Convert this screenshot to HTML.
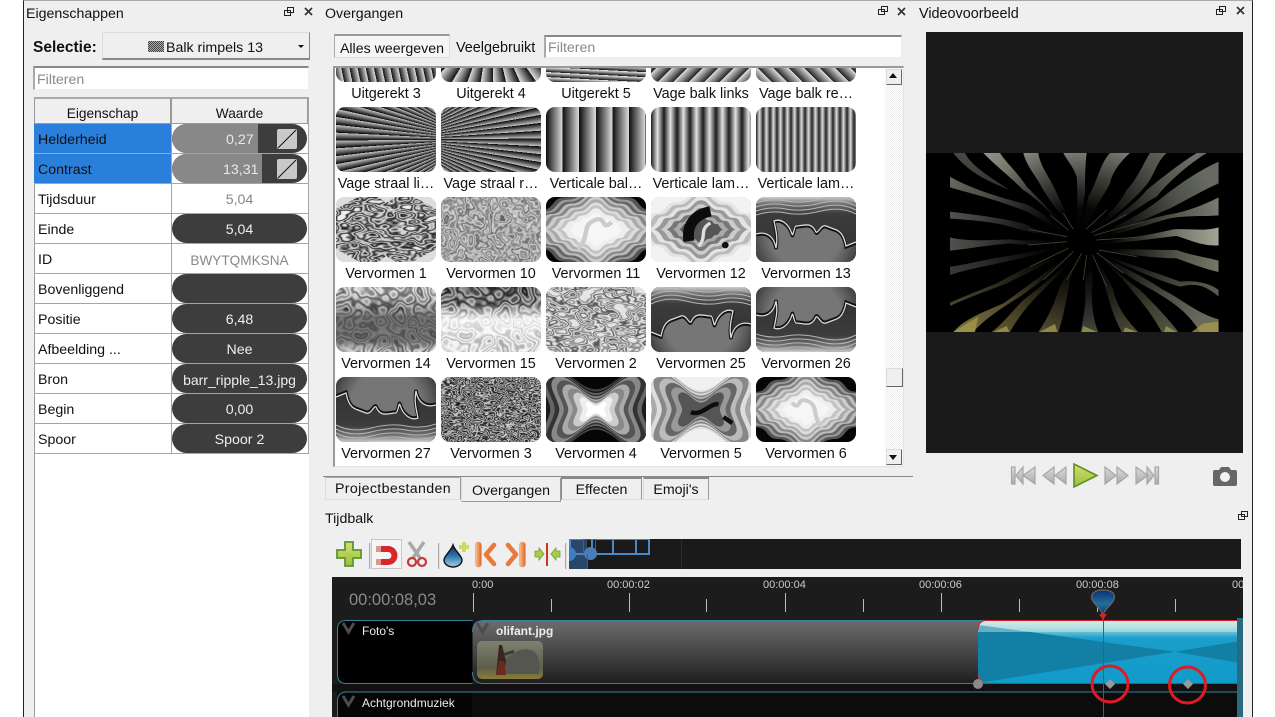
<!DOCTYPE html>
<html lang="nl"><head><meta charset="utf-8"><title>Overgangen</title>
<style>
html,body{margin:0;padding:0;background:#fff}
body{width:1275px;height:717px;overflow:hidden;position:relative;font:14.2px "Liberation Sans",sans-serif;color:#111}
.x{position:absolute;white-space:nowrap}
.app{position:absolute;left:23px;top:0;width:1230px;height:717px;background:#efefef;box-sizing:border-box;border-left:1px solid #222;border-right:1px solid #222;border-top:1px solid #aaa}
.abs{position:absolute;box-sizing:border-box}
.inp{background:#fff;border:1px solid #eee;border-top:2px solid #888;border-left:2px solid #aaa;color:#8a8a8a;padding-left:2px;line-height:23px}
.row{position:absolute;left:34px;width:274px;height:30px;border-bottom:1px solid #a5a5a5;box-sizing:border-box}
.lab{position:absolute;left:4px;top:8px;line-height:16px}
.pill{position:absolute;left:138px;top:0;width:135px;height:29px;border-radius:15px;background:#3d3d3d;color:#eee;text-align:center;line-height:33px;overflow:hidden}
.plain{position:absolute;left:138px;top:0;width:135px;text-align:center;color:#888;line-height:33px}
.t{position:absolute;width:100px;height:65px;border-radius:9px;overflow:hidden;background:#888}
.t svg{display:block;width:100px;height:65px}
.l{position:absolute;width:104px;text-align:center;white-space:nowrap;line-height:16px;margin-top:1px;font-size:14.4px}
.tab{position:absolute;box-sizing:border-box;text-align:center;background:#efefef;border:1px solid #999;border-left-color:#ddd;border-bottom:1px solid #ddd;border-top:2px solid #8a8a8a;line-height:23px}
.hl{color:#eee;font-size:12px;text-shadow:0 0 3px #000}
</style></head><body>
<svg width="0" height="0" style="position:absolute"><defs>
<filter id="w1" x="0" y="0" width="100%" height="100%" color-interpolation-filters="sRGB"><feTurbulence type="fractalNoise" baseFrequency=".05 .11" numOctaves="2" seed="7"/><feColorMatrix values="1 0 0 0 0 1 0 0 0 0 1 0 0 0 0 0 0 0 0 1"/><feComponentTransfer><feFuncR type="table" tableValues="0 0 .1 .85 .1 .9 .2 .9 .15 .9 .1 .9 .95 .1 0 0 0"/><feFuncG type="table" tableValues="0 0 .1 .85 .1 .9 .2 .9 .15 .9 .1 .9 .95 .1 0 0 0"/><feFuncB type="table" tableValues="0 0 .1 .85 .1 .9 .2 .9 .15 .9 .1 .9 .95 .1 0 0 0"/></feComponentTransfer></filter>
<filter id="w2" x="0" y="0" width="100%" height="100%" color-interpolation-filters="sRGB"><feTurbulence type="fractalNoise" baseFrequency=".06 .12" numOctaves="2" seed="12"/><feColorMatrix values="1 0 0 0 0 1 0 0 0 0 1 0 0 0 0 0 0 0 0 1"/><feComponentTransfer><feFuncR type="table" tableValues=".9 .9 .9 .9 .3 .9 .45 .95 .3 .95 .5 .9 .9 .9 .9 .9 .9"/><feFuncG type="table" tableValues=".9 .9 .9 .9 .3 .9 .45 .95 .3 .95 .5 .9 .9 .9 .9 .9 .9"/><feFuncB type="table" tableValues=".9 .9 .9 .9 .3 .9 .45 .95 .3 .95 .5 .9 .9 .9 .9 .9 .9"/></feComponentTransfer></filter>
<filter id="w3" x="0" y="0" width="100%" height="100%" color-interpolation-filters="sRGB"><feTurbulence type="fractalNoise" baseFrequency=".09 .17" numOctaves="2" seed="21"/><feColorMatrix values="1 0 0 0 0 1 0 0 0 0 1 0 0 0 0 0 0 0 0 1"/><feComponentTransfer><feFuncR type="table" tableValues="0 0 0 .9 .05 .8 .05 .9 .1 .85 .05 .8 .05 .9 0 0 0"/><feFuncG type="table" tableValues="0 0 0 .9 .05 .8 .05 .9 .1 .85 .05 .8 .05 .9 0 0 0"/><feFuncB type="table" tableValues="0 0 0 .9 .05 .8 .05 .9 .1 .85 .05 .8 .05 .9 0 0 0"/></feComponentTransfer></filter>
<filter id="w10" x="0" y="0" width="100%" height="100%" color-interpolation-filters="sRGB"><feTurbulence type="fractalNoise" baseFrequency=".06" numOctaves="3" seed="31"/><feColorMatrix values="1 0 0 0 0 1 0 0 0 0 1 0 0 0 0 0 0 0 0 1"/><feComponentTransfer><feFuncR type="table" tableValues=".4 .4 .55 .35 .8 .45 .85 .5 .8 .4 .85 .5 .8 .35 .55 .4 .4"/><feFuncG type="table" tableValues=".4 .4 .55 .35 .8 .45 .85 .5 .8 .4 .85 .5 .8 .35 .55 .4 .4"/><feFuncB type="table" tableValues=".4 .4 .55 .35 .8 .45 .85 .5 .8 .4 .85 .5 .8 .35 .55 .4 .4"/></feComponentTransfer></filter>
<filter id="b" x="0" y="0" width="100%" height="100%" color-interpolation-filters="sRGB"><feTurbulence type="fractalNoise" baseFrequency=".055" numOctaves="2" seed="9"/><feColorMatrix values="1 0 0 0 0 1 0 0 0 0 1 0 0 0 0 0 0 0 0 1"/><feComponentTransfer result="n"><feFuncR type="table" tableValues="1 1 .4 1 .1 1 .45 1 .2 1 .35 1 .1 1 .5 1 1"/><feFuncG type="table" tableValues="1 1 .4 1 .1 1 .45 1 .2 1 .35 1 .1 1 .5 1 1"/><feFuncB type="table" tableValues="1 1 .4 1 .1 1 .45 1 .2 1 .35 1 .1 1 .5 1 1"/></feComponentTransfer><feBlend in="SourceGraphic" in2="n" mode="multiply"/></filter>
<path id="sD" d="M0-30C8-30 8-20 18-20 26-20 24-12 32-12 40-12 36-5 46 0 36 5 40 12 32 12 24 12 26 20 18 20 8 20 8 30 0 30-8 30-8 20-18 20-26 20-24 12-32 12-40 12-36 5-46 0-36-5-40-12-32-12-24-12-26-20-18-20-8-20-8-30 0-30Z"/>
<path id="sX" d="M-30-25C-20-28-10-10 0-10 10-10 20-28 30-25 40-20 28-8 28 0 28 8 40 20 30 25 20 28 10 10 0 10-10 10-20 28-30 25-40 20-28 8-28 0-28-8-40-20-30-25Z"/>
<g id="v11"><rect x="-90" y="-60" width="180" height="120" fill="#060606"/><use href="#sD" transform="scale(1.32)" fill="#555"/><use href="#sD" transform="scale(1.22)" fill="#999"/><use href="#sD" transform="scale(1.14)" fill="#666"/><use href="#sD" transform="scale(1.06)" fill="#bbb"/><use href="#sD" transform="scale(.98)" fill="#888"/><use href="#sD" transform="scale(.9)" fill="#ccc"/><use href="#sD" transform="scale(.82)" fill="#aaa"/><use href="#sD" transform="scale(.74)" fill="#ddd"/><use href="#sD" transform="scale(.66)" fill="#c4c4c4"/><use href="#sD" transform="scale(.58)" fill="#eee"/><use href="#sD" transform="scale(.45)" fill="#f6f6f6"/><path d="M-14 16C-4 6-12-4 0-8 8-11 4 2 12-6" fill="none" stroke="#ccc" stroke-width="3.500"/></g>
<g id="v12"><rect x="-90" y="-60" width="180" height="120" fill="#f2f2f2"/><use href="#sD" transform="scale(1.05)" fill="#e4e4e4"/><use href="#sD" transform="scale(.95)" fill="#bbb"/><use href="#sD" transform="scale(.85)" fill="#e4e4e4"/><use href="#sD" transform="scale(.75)" fill="#999"/><use href="#sD" transform="scale(.65)" fill="#ccc"/><use href="#sD" transform="scale(.55)" fill="#777"/><use href="#sD" transform="scale(.45)" fill="#aaa"/><use href="#sD" transform="scale(.35)" fill="#555"/><path d="M-9 9C-11-5-3-12 7-14" fill="none" stroke="#0c0c0c" stroke-width="8"/><path d="M-2 13C5 6-2 0 7-5" fill="none" stroke="#ddd" stroke-width="2.500"/><circle cx="18" cy="12" r="2.500" fill="#111"/></g>
<g id="v4"><rect x="-90" y="-60" width="180" height="120" fill="#060606"/><use href="#sX" transform="scale(1.75)" fill="#444"/><use href="#sX" transform="scale(1.58)" fill="#1c1c1c"/><use href="#sX" transform="scale(1.42)" fill="#666"/><use href="#sX" transform="scale(1.28)" fill="#333"/><use href="#sX" transform="scale(1.14)" fill="#888"/><use href="#sX" transform="scale(1)" fill="#555"/><use href="#sX" transform="scale(.86)" fill="#aaa"/><use href="#sX" transform="scale(.72)" fill="#888"/><use href="#sX" transform="scale(.58)" fill="#ccc"/><use href="#sX" transform="scale(.42)" fill="#eee"/><use href="#sX" transform="scale(.26)" fill="#fff"/></g>
<g id="v5"><rect x="-90" y="-60" width="180" height="120" fill="#f0f0f0"/><use href="#sX" transform="scale(1.55)" fill="#e4e4e4"/><use href="#sX" transform="scale(1.4)" fill="#aaa"/><use href="#sX" transform="scale(1.26)" fill="#ddd"/><use href="#sX" transform="scale(1.12)" fill="#888"/><use href="#sX" transform="scale(.98)" fill="#bbb"/><use href="#sX" transform="scale(.84)" fill="#666"/><use href="#sX" transform="scale(.7)" fill="#999"/><use href="#sX" transform="scale(.54)" fill="#555"/><path d="M-8 2C0 6 8-6 14-4M18 6l7 5" fill="none" stroke="#0c0c0c" stroke-width="3.500"/></g>
<linearGradient id="l14" x1="0" y1="0" x2="0" y2="1"><stop offset="0" stop-color="#eee"/><stop offset=".3" stop-color="#bbb"/><stop offset=".45" stop-color="#7a7a7a"/><stop offset=".8" stop-color="#8a8a8a"/><stop offset="1" stop-color="#ddd"/></linearGradient>
<linearGradient id="l15" x1="0" y1="0" x2="0" y2="1"><stop offset="0" stop-color="#aaa"/><stop offset=".35" stop-color="#ccc"/><stop offset=".55" stop-color="#fff"/><stop offset="1" stop-color="#f4f4f4"/></linearGradient>
<linearGradient id="wh15" x1="0" y1="0" x2="0" y2="1"><stop offset=".25" stop-color="#fff" stop-opacity="0"/><stop offset=".5" stop-color="#fff" stop-opacity=".85"/><stop offset=".85" stop-color="#fff" stop-opacity=".6"/></linearGradient>
<linearGradient id="wh14" x1="0" y1="0" x2="0" y2="1"><stop offset="0" stop-color="#fff" stop-opacity=".35"/><stop offset=".35" stop-color="#fff" stop-opacity=".1"/><stop offset=".45" stop-color="#777" stop-opacity=".55"/><stop offset=".85" stop-color="#777" stop-opacity=".55"/><stop offset="1" stop-color="#fff" stop-opacity=".2"/></linearGradient>
<linearGradient id="wtop" x1="0" y1="0" x2="0" y2="1"><stop offset="0" stop-color="#cfcfcf"/><stop offset=".12" stop-color="#777"/><stop offset=".32" stop-color="#3c3c3c"/><stop offset="1" stop-color="#333"/></linearGradient>
<radialGradient id="wvig" gradientUnits="userSpaceOnUse" cx="50" cy="36" r="64"><stop offset=".55" stop-color="#222" stop-opacity="0"/><stop offset="1" stop-color="#111" stop-opacity=".85"/></radialGradient>
<g id="wave"><rect width="100" height="65" fill="#767676"/><rect width="100" height="65" fill="url(#wvig)"/>
<path d="M0 0H100V46L90 50C88 40 85 35 78 33L70 30C65 28 62 38 60 36 55 25 48 30 40 30 38 30 37 42 36 38 33 28 25 22 18 25 20 35 22 42 20 52 18 40 10 35 0 38Z" fill="url(#wtop)"/>
<path d="M0 6q15-5 30-2t35-2 35 3M0 10q15-5 30-2t35-2 35 3M0 14q15-5 30-2t35-2 35 3M0 18q15-5 30-2t35-2 35 3" fill="none" stroke="#b4b4b4" stroke-width="1"/>
<path d="M100 46L90 50C88 40 85 35 78 33L70 30C65 28 62 38 60 36 55 25 48 30 40 30 38 30 37 42 36 38 33 28 25 22 18 25 20 35 22 42 20 52 18 40 10 35 0 38" fill="none" stroke="#111" stroke-width="3.200"/>
<path d="M100 45L90 49C88 39 85 34 78 32L70 29C65 27 62 37 60 35 55 24 48 29 40 29 38 29 37 41 36 37 33 27 25 21 18 24 20 34 22 41 20 51 18 39 10 34 0 37" fill="none" stroke="#ddd" stroke-width="1.300"/></g>
<radialGradient id="dim" gradientUnits="userSpaceOnUse" cx="510" cy="300" r="470"><stop offset="0" stop-color="#000"/><stop offset=".2" stop-color="#000" stop-opacity=".97"/><stop offset=".38" stop-color="#000" stop-opacity=".72"/><stop offset=".65" stop-color="#000" stop-opacity=".3"/><stop offset=".9" stop-color="#000" stop-opacity=".05"/></radialGradient>
<linearGradient id="gloss" x1="0" y1="0" x2="0" y2="1"><stop offset="0" stop-color="#e2e8e8"/><stop offset=".1" stop-color="#a8dcdc"/><stop offset=".28" stop-color="#1a9ecb"/><stop offset="1" stop-color="#109bc9"/></linearGradient>
<linearGradient id="clip" x1="0" y1="0" x2="0" y2="1"><stop offset="0" stop-color="#6d6d6d"/><stop offset="1" stop-color="#1e1e1e"/></linearGradient>
<linearGradient id="tg" x1="0" y1="0" x2="0" y2="1"><stop offset="0" stop-color="#dcdcdc"/><stop offset="1" stop-color="#aaa"/></linearGradient>
<linearGradient id="pg" x1="0" y1="0" x2="0" y2="1"><stop offset="0" stop-color="#d0e070"/><stop offset="1" stop-color="#9abf3c"/></linearGradient>
<linearGradient id="og" x1="0" y1="0" x2="1" y2="0"><stop offset="0" stop-color="#f6c490"/><stop offset="1" stop-color="#e2622a"/></linearGradient>
<linearGradient id="dg" x1="0" y1="0" x2="0" y2="1"><stop offset="0" stop-color="#0c2a50"/><stop offset=".5" stop-color="#2b78b0"/><stop offset="1" stop-color="#a8cce8"/></linearGradient>
<linearGradient id="ph" x1="0" y1="0" x2="0" y2="1"><stop offset="0" stop-color="#0b2f78"/><stop offset=".55" stop-color="#236f96"/><stop offset="1" stop-color="#0b3a6a"/></linearGradient>
<linearGradient id="thb" x1="0" y1="0" x2="0" y2="1"><stop offset="0" stop-color="#7d8170"/><stop offset=".7" stop-color="#5d5e4c"/><stop offset="1" stop-color="#8a7c36"/></linearGradient>
</defs></svg>

<div class="app"></div>

<!-- Eigenschappen -->
<div class="x" style="left:26px;top:6px">Eigenschappen</div>
<svg class="x" style="left:284px;top:7px" width="10" height="10"><path d="M3.500 .5h6v5h-6zM.5 3.500h6v5h-6z" fill="#efefef" stroke="#222"/></svg>
<svg class="x" style="left:304px;top:7px" width="10" height="10"><path d="M1 1l7 7M8 1L1 8" stroke="#333" stroke-width="1.700"/></svg>
<div class="x" style="left:33px;top:39px;font-weight:bold;font-size:15.5px">Selectie:</div>
<div class="abs" style="left:102px;top:32px;width:208px;height:28px;background:#efefef;border:1px solid #ddd;border-right-color:#888;border-bottom:2px solid #888"></div>
<div class="abs" style="left:148px;top:41px;width:16px;height:11px;background:repeating-conic-gradient(#444 0 25%,#aaa 0 50%) 0 0/2px 2px"></div>
<div class="x" style="left:166px;top:40px">Balk rimpels 13</div>
<div class="abs" style="left:298px;top:45px;border:3px solid transparent;border-top:3px solid #111"></div>
<div class="abs inp" style="left:33px;top:66px;width:276px;height:24px;line-height:25px">Filteren</div>

<div class="abs" style="left:34px;top:97px;width:275px;height:620px;background:#fff;border-left:1px solid #999"></div>
<div class="abs" style="left:34px;top:97px;width:137px;height:27px;background:#efefef;border:1px solid #999;border-top:2px solid #aaa;text-align:center;line-height:29px;font-size:13.700px">Eigenschap</div>
<div class="abs" style="left:171px;top:97px;width:137px;height:27px;background:#efefef;border:1px solid #999;border-top:2px solid #aaa;text-align:center;line-height:29px;font-size:13.700px">Waarde</div>

<div class="row" style="top:124px"><div class="abs" style="left:0;top:0;width:137px;height:29px;background:#2a7fdb"></div><div class="lab" style="left:4px">Helderheid</div><div class="pill"><div class="abs" style="left:0;top:0;width:86px;height:29px;background:#888"></div><div class="abs" style="left:54px;top:0;color:#e8e8e8">0,27</div><svg class="abs" style="left:105px;top:5px" width="20" height="20"><rect width="20" height="20" rx="2" fill="#c8c8c8"/><path d="M1 19L19 1" stroke="#111"/></svg></div></div>
<div class="row" style="top:154px"><div class="abs" style="left:0;top:0;width:137px;height:29px;background:#2a7fdb"></div><div class="lab">Contrast</div><div class="pill"><div class="abs" style="left:0;top:0;width:90px;height:29px;background:#888"></div><div class="abs" style="left:51px;top:0;color:#e8e8e8">13,31</div><svg class="abs" style="left:105px;top:5px" width="20" height="20"><rect width="20" height="20" rx="2" fill="#c8c8c8"/><path d="M1 19L19 1" stroke="#111"/></svg></div></div>
<div class="row" style="top:184px"><div class="lab">Tijdsduur</div><div class="plain">5,04</div></div>
<div class="row" style="top:214px"><div class="lab">Einde</div><div class="pill">5,04</div></div>
<div class="row" style="top:244px"><div class="lab">ID</div><div class="plain" style="font-size:13.600px">BWYTQMKSNA</div></div>
<div class="row" style="top:274px"><div class="lab">Bovenliggend</div><div class="pill"></div></div>
<div class="row" style="top:304px"><div class="lab">Positie</div><div class="pill">6,48</div></div>
<div class="row" style="top:334px"><div class="lab">Afbeelding ...</div><div class="pill">Nee</div></div>
<div class="row" style="top:364px"><div class="lab">Bron</div><div class="pill" style="font-size:14px">barr_ripple_13.jpg</div></div>
<div class="row" style="top:394px"><div class="lab">Begin</div><div class="pill">0,00</div></div>
<div class="row" style="top:424px"><div class="lab">Spoor</div><div class="pill">Spoor 2</div></div>
<div class="abs" style="left:171px;top:124px;width:1px;height:330px;background:#a5a5a5"></div>
<div class="abs" style="left:308px;top:97px;width:1px;height:357px;background:#a5a5a5"></div>

<!-- Overgangen -->
<div class="x" style="left:325px;top:6px">Overgangen</div>
<svg class="x" style="left:878px;top:6px" width="10" height="10"><path d="M3.500 .5h6v5h-6zM.5 3.500h6v5h-6z" fill="#efefef" stroke="#222"/></svg>
<svg class="x" style="left:897px;top:7px" width="10" height="10"><path d="M1 1l7 7M8 1L1 8" stroke="#333" stroke-width="1.700"/></svg>
<div class="abs" style="left:334px;top:34px;width:116px;height:24px;background:#f5f5f5;border:1px solid #ddd;border-top:2px solid #999;border-left-color:#aaa;text-align:center;line-height:27px">Alles weergeven</div>
<div class="x" style="left:456px;top:40px;font-size:14.400px">Veelgebruikt</div>
<div class="abs inp" style="left:544px;top:35px;width:358px;height:23px">Filteren</div>

<div class="abs" style="left:333px;top:66px;width:571px;height:401px;background:#fff;border:1px solid #e4e4e4;border-top:2px solid #999;border-left:2px solid #999;overflow:hidden" id="list">
 <div class="abs" style="left:550px;top:0;width:18px;height:399px;background:repeating-conic-gradient(#eee 0 25%,#fff 0 50%) 0 0/2px 2px"></div>
 <div class="abs" style="left:551px;top:1px;width:16px;height:16px;background:#efefef;border:1px solid #ddd;border-right-color:#666;border-bottom-color:#666"></div>
 <div class="abs" style="left:554px;top:5px;border:4px solid transparent;border-top:0;border-bottom:5px solid #111"></div>
 <div class="abs" style="left:551px;top:300px;width:17px;height:19px;background:#efefef;border:1px solid #ddd;border-right-color:#666;border-bottom-color:#666"></div>
 <div class="abs" style="left:551px;top:381px;width:16px;height:16px;background:#efefef;border:1px solid #ddd;border-right-color:#666;border-bottom-color:#666"></div>
 <div class="abs" style="left:554px;top:387px;border:4px solid transparent;border-bottom:0;border-top:5px solid #111"></div>

 <!-- row 1 -->
 <div class="t" style="left:1px;top:-51px;background:repeating-linear-gradient(78deg,#111,#ddd 8px)"></div>
 <div class="t" style="left:106px;top:-51px;background:repeating-conic-gradient(from 90deg at 50% 0,#111,#ddd 11deg)"></div>
 <div class="t" style="left:211px;top:-51px;background:repeating-linear-gradient(3deg,#111,#eee 5px)"></div>
 <div class="t" style="left:316px;top:-51px;background:repeating-linear-gradient(-45deg,#222,#ddd 11px)"></div>
 <div class="t" style="left:421px;top:-51px;background:repeating-linear-gradient(45deg,#222,#ddd 11px)"></div>
 <!-- row 2 -->
 <div class="t" style="left:1px;top:39px;background:repeating-conic-gradient(from 180deg at 140% 50%,#060606,#c4c4c4 3.200deg)"></div>
 <div class="t" style="left:106px;top:39px;background:repeating-conic-gradient(from 0deg at -40% 50%,#060606,#c4c4c4 3.200deg)"></div>
 <div class="t" style="left:211px;top:39px;background:repeating-linear-gradient(90deg,#0c0c0c,#ddd 16.600px)"></div>
 <div class="t" style="left:316px;top:39px;background:repeating-linear-gradient(90deg,#1a1a1a,#e2e2e2 6.500px,#1a1a1a 13px)"></div>
 <div class="t" style="left:421px;top:39px;background:repeating-linear-gradient(90deg,#222,#ddd 3.500px,#222 7px)"></div>
 <!-- row 3 -->
 <div class="t" style="left:1px;top:129px;background:#ddd"><svg><rect width="100" height="65" filter="url(#w1)"/><path d="M0 0H22L0 12ZM100 0H78L100 12ZM0 65H24L0 52ZM100 65H76L100 52ZM42 0H60L50 6ZM42 65H60L50 59Z" fill="#ddd"/></svg></div>
 <div class="t" style="left:106px;top:129px"><svg><rect width="100" height="65" filter="url(#w10)"/></svg></div>
 <div class="t" style="left:211px;top:129px"><svg><use href="#v11" transform="translate(50 32.500) scale(1.3 1.22)"/></svg></div>
 <div class="t" style="left:316px;top:129px"><svg><use href="#v12" transform="translate(50 32.500) scale(1.35 1.3)"/></svg></div>
 <div class="t" style="left:421px;top:129px"><svg><use href="#wave"/></svg></div>
 <!-- row 4 -->
 <div class="t" style="left:1px;top:219px"><svg><rect width="100" height="65" fill="url(#l14)" filter="url(#b)"/><rect width="100" height="65" fill="url(#wh14)"/></svg></div>
 <div class="t" style="left:106px;top:219px"><svg><rect width="100" height="65" fill="url(#l15)" filter="url(#b)"/><rect width="100" height="65" fill="url(#wh15)"/></svg></div>
 <div class="t" style="left:211px;top:219px;background:#e4e4e4"><svg><rect width="100" height="65" filter="url(#w2)"/></svg></div>
 <div class="t" style="left:316px;top:219px"><svg><use href="#wave" transform="matrix(-1 0 0 1 100 0)"/></svg></div>
 <div class="t" style="left:421px;top:219px"><svg><use href="#wave" transform="matrix(1 0 0 -1 0 65)"/></svg></div>
 <!-- row 5 -->
 <div class="t" style="left:1px;top:309px"><svg><use href="#wave" transform="matrix(-1 0 0 -1 100 65)"/></svg></div>
 <div class="t" style="left:106px;top:309px"><svg><rect width="100" height="65" filter="url(#w3)"/></svg></div>
 <div class="t" style="left:211px;top:309px"><svg><use href="#v4" transform="translate(50 32.500) scale(1.15)"/></svg></div>
 <div class="t" style="left:316px;top:309px"><svg><use href="#v5" transform="translate(50 32.500) scale(1.25)"/></svg></div>
 <div class="t" style="left:421px;top:309px"><svg><use href="#v11" transform="translate(50 32.500) scale(-1.18 1.12)"/></svg></div>
 <!-- labels -->
 <div class="l" style="left:-1px;top:17px">Uitgerekt 3</div><div class="l" style="left:104px;top:17px">Uitgerekt 4</div><div class="l" style="left:209px;top:17px">Uitgerekt 5</div><div class="l" style="left:314px;top:17px">Vage balk links</div><div class="l" style="left:419px;top:17px">Vage balk re…</div>
 <div class="l" style="left:-1px;top:107px">Vage straal li…</div><div class="l" style="left:104px;top:107px">Vage straal r…</div><div class="l" style="left:209px;top:107px">Verticale bal…</div><div class="l" style="left:314px;top:107px">Verticale lam…</div><div class="l" style="left:419px;top:107px">Verticale lam…</div>
 <div class="l" style="left:-1px;top:197px">Vervormen 1</div><div class="l" style="left:104px;top:197px">Vervormen 10</div><div class="l" style="left:209px;top:197px">Vervormen 11</div><div class="l" style="left:314px;top:197px">Vervormen 12</div><div class="l" style="left:419px;top:197px">Vervormen 13</div>
 <div class="l" style="left:-1px;top:287px">Vervormen 14</div><div class="l" style="left:104px;top:287px">Vervormen 15</div><div class="l" style="left:209px;top:287px">Vervormen 2</div><div class="l" style="left:314px;top:287px">Vervormen 25</div><div class="l" style="left:419px;top:287px">Vervormen 26</div>
 <div class="l" style="left:-1px;top:377px">Vervormen 27</div><div class="l" style="left:104px;top:377px">Vervormen 3</div><div class="l" style="left:209px;top:377px">Vervormen 4</div><div class="l" style="left:314px;top:377px">Vervormen 5</div><div class="l" style="left:419px;top:377px">Vervormen 6</div>
</div>

<div class="abs" style="left:323px;top:476px;width:590px;height:1px;background:#888"></div>
<div class="tab" style="left:325px;top:477px;width:136px;height:23px;border-top:1px solid #aaa;letter-spacing:.35px">Projectbestanden</div>
<div class="tab" style="left:461px;top:478px;width:100px;height:24px;border-top:0;border-bottom:1px solid #999;line-height:26px">Overgangen</div>
<div class="tab" style="left:561px;top:477px;width:81px;height:23px;border-left:1px solid #888;line-height:23px">Effecten</div>
<div class="tab" style="left:643px;top:477px;width:66px;height:23px;line-height:23px">Emoji's</div>

<!-- Tijdbalk -->
<div class="x" style="left:325px;top:511px">Tijdbalk</div>
<svg class="x" style="left:1238px;top:511px" width="10" height="10"><path d="M3.500 .5h6v5h-6zM.5 3.500h6v5h-6z" fill="#efefef" stroke="#222"/></svg>

<!-- Videovoorbeeld -->
<div class="x" style="left:919px;top:6px;font-size:14.400px">Videovoorbeeld</div>
<svg class="x" style="left:1216px;top:6px" width="10" height="10"><path d="M3.500 .5h6v5h-6zM.5 3.500h6v5h-6z" fill="#efefef" stroke="#222"/></svg>
<svg class="x" style="left:1236px;top:6px" width="10" height="10"><path d="M1 1l7 7M8 1L1 8" stroke="#333" stroke-width="1.700"/></svg>
<div class="abs" style="left:926px;top:32px;width:317px;height:421px;background:#1a1a1a"></div>
<svg class="x" style="left:926px;top:153px" width="317" height="179" viewBox="48 39 951 537">
<rect x="48" y="39" width="951" height="537" fill="#000"/>
<clipPath id="vc"><rect x="120" y="39" width="806" height="537"/></clipPath>
<g clip-path="url(#vc)">
<path d="M130 39H165C180 70 220 100 300 150 220 120 170 90 130 39Z" fill="#4a4a45"/>
<path d="M220 39H270C290 70 325 100 350 140 380 170 430 220 490 290 440 240 400 190 340 150 300 110 260 80 220 39Z" fill="#a8a89a"/>
<path d="M340 39H385C390 80 420 110 445 170 470 220 480 250 494 290 470 240 430 200 400 150 380 110 350 80 340 39Z" fill="#bcbcae"/>
<path d="M460 39H530C525 80 525 120 525 160 515 230 510 260 498 292 500 230 505 170 500 110 490 80 470 60 460 39Z" fill="#dcdcd0"/>
<path d="M600 39H660C630 65 605 100 600 130 580 170 560 190 550 220 530 260 520 275 505 292 515 240 530 200 535 170 560 130 570 70 600 39Z" fill="#b8b8a8"/>
<path d="M720 39H770C735 70 735 110 700 145 660 190 600 240 530 285 590 230 630 190 650 150 680 120 700 70 720 39Z" fill="#74766c"/>
<path d="M860 39H890C840 70 780 120 740 170 700 190 640 240 535 290 620 230 680 190 710 150 760 110 810 70 860 39Z" fill="#74766c"/>
<path d="M926 65V130C880 150 830 180 780 205 720 230 640 270 545 292 620 260 700 220 760 170 810 130 870 90 926 65Z" fill="#6c7066"/>
<path d="M926 172V226C880 230 830 225 780 235 720 250 640 280 548 298 640 260 700 240 770 225 830 215 880 195 926 172Z" fill="#7c7f72"/>
<path d="M926 262V316C880 320 840 300 800 288 730 295 640 310 555 312 640 295 720 285 790 268 840 265 880 275 926 262Z" fill="#b0b0a0"/>
<path d="M926 362V396C880 385 840 370 800 355 720 355 640 340 560 330 640 325 720 330 800 330 840 345 880 350 926 362Z" fill="#7c7c6e"/>
<path d="M926 450V470C880 430 850 430 810 440 740 420 650 380 570 340 650 370 730 395 810 425 860 420 900 430 926 450Z" fill="#5e5e52"/>
<path d="M926 538V576H870C830 510 780 480 700 435 640 400 600 370 570 345 640 380 700 410 760 450 820 480 860 520 926 538Z" fill="#6e6d60"/>
<path d="M805 576H755C720 510 680 470 640 420 610 390 590 370 578 350 610 390 650 420 690 450 730 490 770 530 805 576Z" fill="#5c604a"/>
<path d="M685 576H635C610 530 600 490 585 440 575 410 565 380 555 345 575 380 590 410 610 450 620 500 650 540 685 576Z" fill="#64644e"/>
<path d="M565 576H512C520 530 530 490 525 440 525 400 535 370 540 335 550 380 550 420 545 450 545 500 550 540 565 576Z" fill="#6c7064"/>
<path d="M385 576H445C460 530 470 480 480 420 495 390 510 360 522 338 500 370 470 400 450 440 430 500 410 540 385 576Z" fill="#76704c"/>
<path d="M245 576H300C320 540 350 500 380 470 430 420 480 370 512 330 470 370 420 420 340 480 310 510 280 550 245 576Z" fill="#6c643c"/>
<path d="M130 576H190C220 540 280 500 330 470 400 420 450 380 495 328 440 370 380 420 280 490 210 520 160 540 130 576Z" fill="#787042"/>
<path d="M120 488V498C180 470 240 450 290 430 370 390 440 360 482 320 420 350 350 380 260 430 210 450 160 470 120 488Z" fill="#4a4630"/>
<path d="M120 380V405C180 385 250 375 310 360 380 345 430 330 472 312 420 325 350 340 250 355 200 365 160 375 120 380Z" fill="#3e403a"/>
<path d="M120 292V332C180 325 240 315 300 310 360 320 430 310 472 296 420 302 360 305 300 298 240 300 170 305 120 292Z" fill="#585c56"/>
<path d="M120 215V236C180 240 250 245 300 260 360 280 430 290 482 292 420 280 360 265 355 255 290 235 200 225 120 215Z" fill="#585c56"/>
<path d="M120 110V142C180 160 250 175 350 215 400 240 450 280 490 296 440 255 400 220 355 195 260 170 180 145 120 110Z" fill="#6a6c62"/>
<rect x="120" y="39" width="806" height="537" fill="url(#dim)"/>
<path d="M475 270L420 225M490 268L460 220M528 268L590 210M545 278L650 222M552 286L700 245M560 300L680 292M566 330L680 350M560 338L640 400M548 345L590 440M530 345L520 420M515 340L470 420M490 335L400 420M475 325L360 380M470 305L355 315M472 290L355 268" stroke="#4a4a3a" stroke-width="2.200" fill="none"/>
<path d="M130 576L205 530 195 576ZM250 576L290 558 298 576ZM388 576L435 552 442 576ZM515 576L520 558 562 576ZM640 576L645 562 682 576ZM762 576L768 558 800 576ZM845 576L880 550 926 545V576Z" fill="#a89c4c" opacity=".75"/>
</g></svg>

<!-- Playback -->
<svg class="x" style="left:1008px;top:462px" width="156" height="28">
<g fill="url(#tg)" stroke="#a6a6a6" stroke-width="1.200"><rect x="3.500" y="5" width="3.500" height="17"/><path d="M15 5V22L8 13.500ZM27 5V22L15 13.500Z"/>
<path d="M46 5V22L35 13.500ZM58 5V22L47 13.500Z"/>
<path d="M97 5V22L108 13.500ZM109 5V22L120 13.500Z"/>
<path d="M128 5V22L140 13.500ZM139 5V22L146 13.500Z"/><rect x="147" y="5" width="3.500" height="17"/></g>
<path d="M66 2V25L89 13.500Z" fill="url(#pg)" stroke="#5f8f1f" stroke-width="1.600"/></svg>
<svg class="x" style="left:1212px;top:465px" width="26" height="22"><path d="M1 7q0-2 2-2h4l2-3h8l2 3h4q2 0 2 2v12q0 2-2 2H3q-2 0-2-2z" fill="#666"/><circle cx="13" cy="12" r="5" fill="#f2f2f2"/></svg>

<!-- Toolbar -->
<svg class="x" style="left:332px;top:536px" width="240" height="38">
<path d="M13 6h8v8h8v8h-8v8h-8v-8H5v-8h8z" fill="url(#pg)" stroke="#5f9430" stroke-width="1.800"/>
<rect x="37" y="7" width="1.200" height="26" fill="#aaa"/>
<rect x="39.500" y="3.500" width="30" height="29" fill="#f5f5f5" stroke="#c8c8c8"/>
<path d="M44 10H56a9.500 9.500 0 0 1 0 19H44V23H56a3.500 3.500 0 0 0 0-7H44Z" fill="#d8262a"/><rect x="44" y="10" width="5" height="6" fill="#d59a98"/><rect x="44" y="23" width="5" height="6" fill="#d59a98"/>
<path d="M77 6L88 22M92 6L81 22" stroke="#a8a8a8" stroke-width="3.500"/><circle cx="80" cy="26" r="4" fill="none" stroke="#c23c3c" stroke-width="2.200"/><circle cx="90" cy="26" r="4" fill="none" stroke="#c23c3c" stroke-width="2.200"/>
<rect x="106" y="7" width="1.200" height="26" fill="#aaa"/>
<path d="M121 9c2 6 9 11 9 15a9 7 0 0 1-18 0c0-4 7-9 9-15z" fill="url(#dg)" stroke="#111" stroke-width="1.400"/>
<path d="M127 9h3V6h4v3h3v4h-3v3h-4v-3h-3z" fill="#c7dd66"/>
<rect x="143.500" y="6" width="6" height="25" rx="3" fill="url(#og)" stroke="#e8a070" stroke-width=".6"/><path d="M162 9l-8 9.500 8 9.500" fill="none" stroke="#e87a3a" stroke-width="4.500" stroke-linejoin="round" stroke-linecap="round"/>
<path d="M176 9l8 9.500-8 9.500" fill="none" stroke="#e87a3a" stroke-width="4.500" stroke-linejoin="round" stroke-linecap="round"/><rect x="187.500" y="6" width="6" height="25" rx="3" fill="url(#og)" stroke="#e8a070" stroke-width=".6"/>
<rect x="214" y="7" width="2" height="23" fill="#d0302a"/><path d="M203 15h4v-3l5 6-5 6v-3h-4zM228 15h-4v-3l-5 6 5 6v-3h4z" fill="#a8cc44" stroke="#6f9f2f" stroke-width=".8"/>
<rect x="233" y="7" width="1.200" height="26" fill="#aaa"/>
</svg>
<div class="abs" style="left:569px;top:539px;width:672px;height:30px;background:#1a1a1a;overflow:hidden">
<div class="abs" style="left:112px;top:0;width:1px;height:30px;background:#2d2d2d"></div>
<div class="abs" style="left:0;top:0;width:18px;height:30px;background:#2a4668"></div>
<div class="abs" style="left:0;top:0;width:81px;height:16px;border:2px solid #4a88cc;border-top-width:1px"></div>
<div class="abs" style="left:43px;top:0;width:2px;height:15px;background:#4a88cc"></div><div class="abs" style="left:66px;top:0;width:2px;height:15px;background:#4a88cc"></div>
<div class="abs" style="left:-7px;top:8px;width:14px;height:14px;border-radius:7px;background:#3f7dc0"></div>
<div class="abs" style="left:14px;top:0;width:13px;height:15px;border:1px solid #d22"></div>
<div class="abs" style="left:22px;top:0;width:2px;height:14px;background:#4a88cc"></div>
<div class="abs" style="left:15px;top:8px;width:13px;height:13px;border-radius:7px;background:#4a7db8"></div>
<div class="abs" style="left:18px;top:15px;width:1px;height:15px;background:#d22"></div>
</div>

<!-- Timeline -->
<div class="abs" style="left:332px;top:577px;width:911px;height:140px;background:#1c1c1c;overflow:hidden"></div>
<div class="x" style="left:349px;top:591px;font-size:16.500px;color:#8a8a8a">00:00:08,03</div>
<div class="x" style="left:472px;top:579px;font-size:11px;color:#ccc">0:00</div>
<div class="x" style="left:607px;top:579px;font-size:11px;color:#ccc">00:00:02</div>
<div class="x" style="left:763px;top:579px;font-size:11px;color:#ccc">00:00:04</div>
<div class="x" style="left:919px;top:579px;font-size:11px;color:#ccc">00:00:06</div>
<div class="x" style="left:1076px;top:579px;font-size:11px;color:#ccc">00:00:08</div>
<div class="x" style="left:1232px;top:579px;font-size:11px;color:#ccc;width:11px;overflow:hidden">00:00</div>
<svg class="x" style="left:332px;top:577px" width="911" height="140">
<g stroke="#bbb"><path d="M141.500 16V35M297.500 16V35M453.500 16V35M609.500 16V35M765.500 16V35M219.500 22V35M374.500 22V35M531.500 22V35M687.500 22V35M843.500 22V35"/></g>
<!-- second track -->
<rect x="0" y="107" width="905" height="8" fill="#111"/>
<rect x="5" y="115" width="900" height="25" fill="#0c0c0c"/>
<rect x="5" y="116" width="135" height="24" fill="#050505"/><path d="M5.500 140V124q0-9 9-9H905" fill="none" stroke="#37829f"/>
<!-- first track -->
<path d="M140.500 43.500H14.500q-9 0-9 9v45q0 9 9 9H140.500z" fill="#000"/>
<path d="M140.500 43.500H14.500q-9 0-9 9v45q0 9 9 9H140.500" fill="none" stroke="#37829f"/>
<path d="M152 43.500H905V106.500H152q-11.500 0-11.500-11.500V55q0-11.500 11.500-11.500z" fill="url(#clip)"/>
<path d="M905 43.500H152q-11.500 0-11.500 11.500M140.500 95q0 11.500 11.500 11.500H905" fill="none" stroke="#37829f"/>
<!-- transition -->
<path d="M646 53q0-9.500 9-9.500H905V106.500H655q-9 0-9-9z" fill="url(#gloss)"/>
<path d="M646 48L843 74.700 646 106ZM843 74.700L905 64.500V85.500Z" fill="#137fa4"/>
<path d="M646 53q0-9.500 9-9.500H905V55H646z" fill="#cfeaea" opacity=".45"/>
<path d="M905.500 106.500H655q-9 0-9-9M646 53q0-9.500 9-9.500H905.500" fill="none" stroke="#d3232b" stroke-width="1.100"/>
<rect x="905" y="41" width="6" height="99" fill="#2a6a80"/>
<circle cx="646" cy="107" r="5" fill="#8a8a8a"/>
<!-- thumb -->
<g><clipPath id="tc"><rect x="145" y="64" width="66" height="38" rx="5"/></clipPath><g clip-path="url(#tc)"><rect x="145" y="64" width="66" height="38" fill="url(#thb)"/><path d="M171 97q-1-16 8-19 12-9 22-4 8 5 6 23z" fill="#55564f"/><path d="M167 68h3l4 16-3 14h-7z" fill="#3a2420"/><path d="M164 98l3-14h5l2 14z" fill="#6a2a1c"/><path d="M172 76l10-3v3l-10 3z" fill="#3a3a34"/></g></g>
<!-- chevrons -->
<path d="M11 46l5.500 9 5.500-9M145 46l5.500 9 5.500-9M11 119l5.500 9 5.500-9" fill="none" stroke="#4c4c4c" stroke-width="3"/>
<!-- playhead -->
<path d="M771.500 38V140" stroke="#d3232b"/>
<path d="M771 38C768 30 759.500 26 759.500 20 759.500 15 765 13 771 13S782.500 15 782.500 20C782.500 26 774 30 771 38Z" fill="url(#ph)" stroke="#666" stroke-width="1.200"/>
<path d="M767 37h8l-4 6z" fill="#d3232b"/>
<path d="M773 107l5-5 5 5-5 5zM851 107l5-5 5 5-5 5z" fill="#999"/>
<circle cx="778" cy="107" r="18" fill="none" stroke="#e01a24" stroke-width="3"/>
<circle cx="855.500" cy="108" r="18" fill="none" stroke="#e01a24" stroke-width="3"/>
</svg>
<div class="x hl" style="left:362px;top:624px">Foto's</div>
<div class="x" style="left:496px;top:624px;font-size:12px;font-weight:bold;color:#eee">olifant.jpg</div>
<div class="x hl" style="left:362px;top:696px">Achtgrondmuziek</div>
</body></html>
